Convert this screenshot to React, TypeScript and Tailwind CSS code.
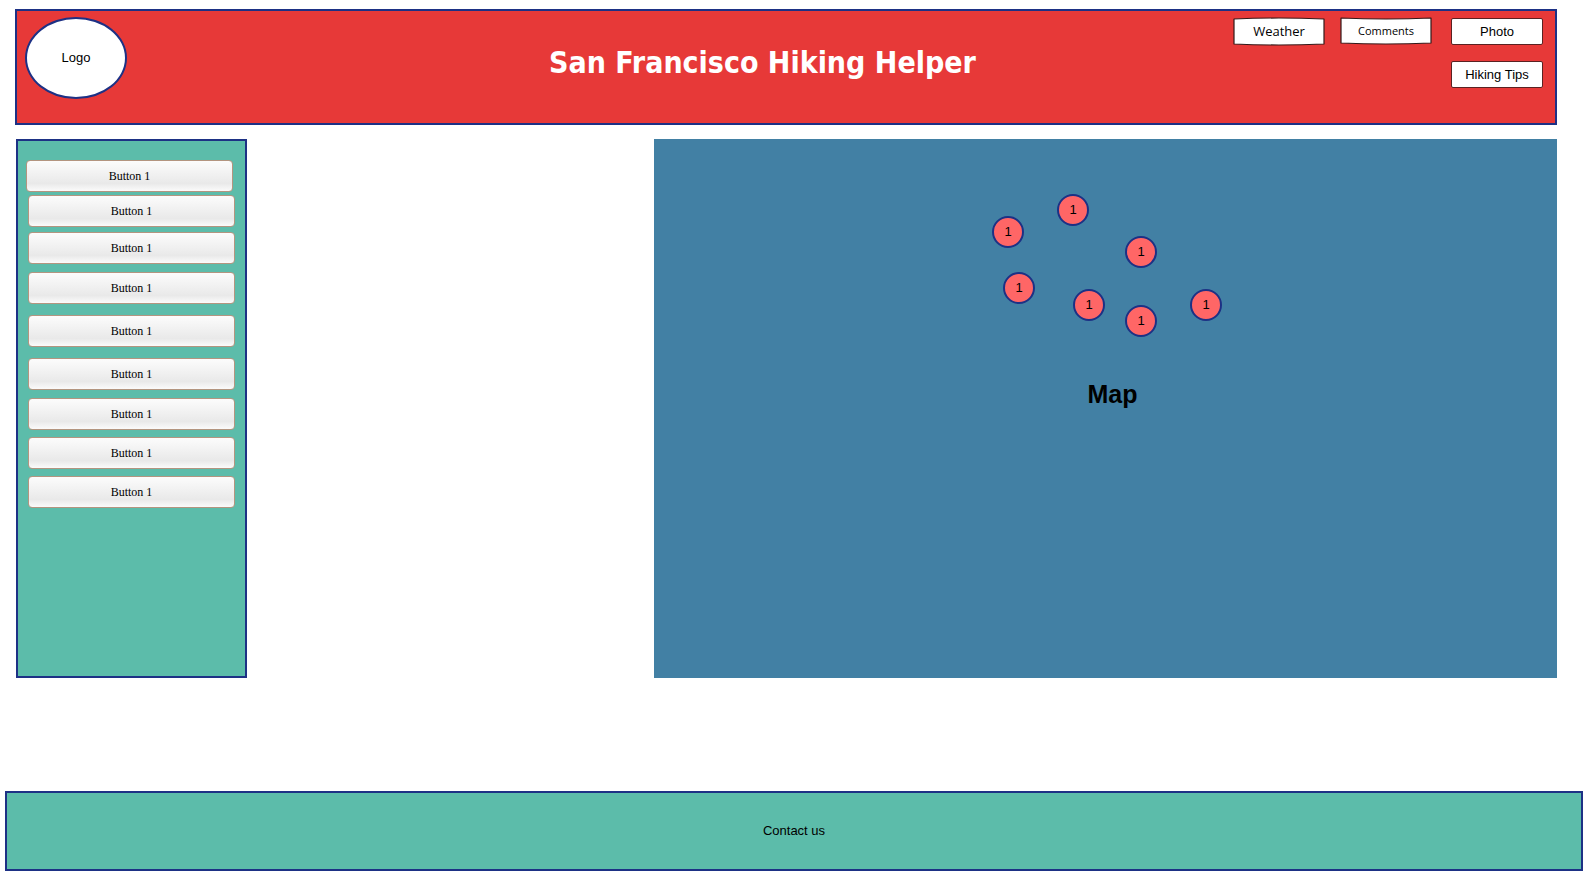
import React from "react";

const sans = "font-['Liberation_Sans',Arial,sans-serif]";
const comic = "font-['Comic_Sans_MS','Open_Sans',sans-serif]";

const navButton = "relative flex h-[27px] w-[92px] cursor-pointer items-center justify-center text-[13px] leading-4 text-black";

function SketchButton({ label, outline, text }: { label: string; outline: string; text: string }) {
  return (
    <button type="button" className={`${navButton} ${comic}`}>
      <svg viewBox="0 0 92 27" className="absolute inset-0 h-full w-full overflow-visible" aria-hidden="true">
        <path d={outline} fill="#fff" stroke="#331a1a" strokeWidth="1.2" strokeLinejoin="round" />
      </svg>
      <span className={`relative ${text}`}>{label}</span>
    </button>
  );
}

function FlatButton({ label }: { label: string }) {
  return (
    <button type="button" className={`${navButton} rounded-[2px] border border-[#5a2222] bg-white`}>
      {label}
    </button>
  );
}

function SideButton() {
  return (
    <button
      type="button"
      className="h-8 w-[207px] shrink-0 cursor-pointer rounded-[4px] border border-[#b39580] bg-linear-to-b from-[#fcfcfc] via-[#e9e9e9] via-75% to-[#fbfbfb] font-['Liberation_Serif','Times_New_Roman',serif] text-[12px] leading-4 text-black"
    >
      Button 1
    </button>
  );
}

const markers = [
  "left-0 top-[22px]",
  "left-[65px] top-0",
  "left-[133px] top-[42px]",
  "left-[11px] top-[78px]",
  "left-[81px] top-[95px]",
  "left-[133px] top-[111px]",
  "left-[198px] top-[95px]",
];

export default function App() {
  return (
    <div className={`min-h-screen bg-white text-[13px] leading-4 text-black ${sans}`}>
      <header className="mr-[29px] ml-[15px] flex pt-[9px]">
        <div className="flex min-h-[116px] flex-1 items-start border-2 border-[#1d3185] bg-[#e73938] pt-[6px] pr-3 pl-2">
          <div className="flex h-[82px] w-[102px] shrink-0 items-center justify-center rounded-[50%] border-2 border-[#1d3185] bg-white">
            Logo
          </div>
          <h1 className="flex-1 pt-[26px] pl-[165px] text-center font-['DejaVu_Sans_Condensed','DejaVu_Sans',Tahoma,sans-serif] text-[30px] leading-10 font-bold text-white">
            San Francisco Hiking Helper
          </h1>
          <nav className="flex shrink-0 gap-[15px]">
            <SketchButton
              label="Weather"
              text="text-[13px]"
              outline="M1 2 Q46 0 91 2 V27 Q46 29 1 27 Z"
            />
            <SketchButton
              label="Comments"
              text="text-[11px]"
              outline="M1 1 Q46 3 91 1 V26 Q46 28 1 26 Z"
            />
            <div className="ml-1 flex flex-col gap-4 pt-px">
              <FlatButton label="Photo" />
              <FlatButton label="Hiking Tips" />
            </div>
          </nav>
        </div>
      </header>

      <main className="mt-[14px] mr-[29px] ml-4 grid min-h-[539px] grid-cols-[231px_407fr_903fr]">
        <aside className="flex flex-col border-2 border-[#1d3185] bg-[#5cbcaa] pt-[19px]">
          <div className="pl-2">
            <SideButton />
          </div>
          <div className="flex flex-col gap-[5px] pt-[3px] pl-2.5">
            <SideButton />
            <SideButton />
          </div>
          <div className="flex flex-col gap-[11px] pt-2 pl-2.5">
            <SideButton />
            <SideButton />
            <SideButton />
          </div>
          <div className="flex flex-col gap-[7px] pt-2 pl-2.5">
            <SideButton />
            <SideButton />
            <SideButton />
          </div>
        </aside>
        <section aria-labelledby="map-title" className="col-start-3 bg-[#4280a4] pt-[55px]">
          <div className="relative mx-auto h-[143px] w-[227px]">
            {markers.map((place) => (
              <button
                key={place}
                type="button"
                className={`absolute flex size-8 cursor-pointer items-center justify-center rounded-full border-2 border-[#1d3185] bg-[#ff6666] ${place}`}
              >
                1
              </button>
            ))}
          </div>
          <h2 id="map-title" className="pt-[41px] pl-[14px] text-center text-[25px] leading-8 font-bold">
            Map
          </h2>
        </section>
      </main>

      <footer className="mt-[113px] mr-[3px] ml-[5px] flex h-20 items-center justify-center border-2 border-[#1d3185] bg-[#5cbcaa]">
        <a href="#contact">Contact us</a>
      </footer>
    </div>
  );
}
